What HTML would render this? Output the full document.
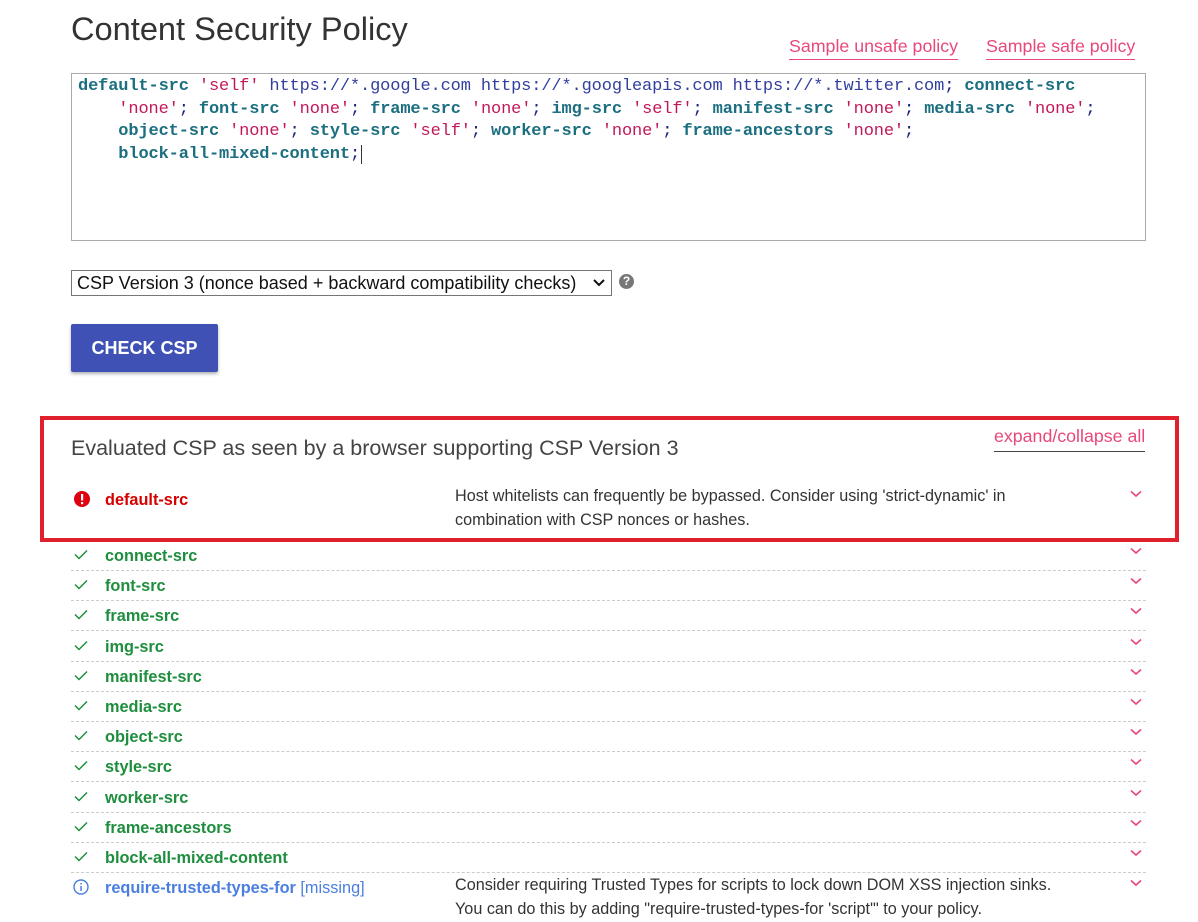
<!DOCTYPE html>
<html><head><meta charset="utf-8"><style>
body{margin:0;width:1198px;height:921px;overflow:hidden;background:#fff;font-family:"Liberation Sans",Arial,sans-serif;position:relative}
.a{position:absolute}
h1{position:absolute;left:71px;top:10px;margin:0;font-weight:400;font-size:32.6px;color:#333}
.lnk{color:#e8487a;font-size:17.8px;border-bottom:1px solid #e8487a;padding-bottom:2px}
.ta{left:71px;top:73px;width:1073px;height:166px;border:1px solid #aaa;font-family:"Liberation Mono",monospace;font-size:17px;letter-spacing:-0.13px;line-height:22.5px;color:#1a237e}
.ta div{position:absolute;left:6px;white-space:pre}
.k{font-weight:bold;color:#1b6f80}
.s{color:#c2185b}
.u{color:#303f9f}
.row{position:absolute;left:71px;width:1075px;height:30px;border-bottom:1px dashed #ccc}
.nm{position:absolute;left:34px;top:7px;font-size:16.3px;font-weight:bold;color:#1e8e3e}
.ck{position:absolute;left:2px;top:6px}
.cv{position:absolute;left:1059px;top:2px}
.ds{position:absolute;left:384px;font-size:16.2px;color:#333;line-height:24px;white-space:nowrap}
</style></head><body>
<h1>Content Security Policy</h1>
<span class="a lnk" style="left:789px;top:36px">Sample unsafe policy</span>
<span class="a lnk" style="left:986px;top:36px">Sample safe policy</span>
<div class="a ta">
<div style="top:2px"><span class="k">default-src</span> <span class="s">'self'</span> <span class="u">https://*.google.com https://*.googleapis.com https://*.twitter.com</span>; <span class="k">connect-src</span></div>
<div style="top:24.5px">    <span class="s">'none'</span>; <span class="k">font-src</span> <span class="s">'none'</span>; <span class="k">frame-src</span> <span class="s">'none'</span>; <span class="k">img-src</span> <span class="s">'self'</span>; <span class="k">manifest-src</span> <span class="s">'none'</span>; <span class="k">media-src</span> <span class="s">'none'</span>;</div>
<div style="top:47px">    <span class="k">object-src</span> <span class="s">'none'</span>; <span class="k">style-src</span> <span class="s">'self'</span>; <span class="k">worker-src</span> <span class="s">'none'</span>; <span class="k">frame-ancestors</span> <span class="s">'none'</span>;</div>
<div style="top:69.5px">    <span class="k">block-all-mixed-content</span>;<span style="border-left:1px solid #333;margin-left:1px"></span></div>
</div>
<div class="a" style="left:71px;top:270px;width:534px;height:24px;border:1px solid #767676;font-size:18px;color:#111;line-height:24px;padding-left:5px;white-space:nowrap">CSP Version 3 (nonce based + backward compatibility checks)<svg style="position:absolute;right:6px;top:8px" width="12" height="8" viewBox="0 0 12 8"><path d="M1 1l5 5 5-5" stroke="#111" stroke-width="2" fill="none"/></svg></div>
<div class="a" style="left:619px;top:274px;width:15px;height:15px;border-radius:50%;background:#777;color:#fff;font-size:12px;font-weight:bold;text-align:center;line-height:15px">?</div>
<div class="a" style="left:71px;top:324px;width:147px;height:48px;background:#3f51b5;border-radius:2px;box-shadow:0 2px 3px rgba(0,0,0,.3);color:#fff;font-size:18px;font-weight:bold;text-align:center;line-height:48px">CHECK CSP</div>
<div class="a" style="left:40px;top:416px;width:1131px;height:118px;border:4px solid #e0202d"></div>
<div class="a" style="left:71px;top:436px;font-size:21.5px;color:#444">Evaluated CSP as seen by a browser supporting CSP Version 3</div>
<span class="a" style="left:994px;top:426px;font-size:17.8px;color:#e8487a;border-bottom:1px solid #444;padding-bottom:4px">expand/collapse all</span>
<div class="row" style="top:484px;height:48px;border:none">
<svg class="ck" style="top:6px" width="18" height="18" viewBox="0 0 18 18"><circle cx="9" cy="9" r="8" fill="#e0000f"/><rect x="8" y="4" width="2.2" height="6.5" fill="#fff"/><rect x="8" y="12" width="2.2" height="2.2" fill="#fff"/></svg>
<span class="nm" style="color:#d50000">default-src</span>
<div class="ds" style="top:0">Host whitelists can frequently be bypassed. Consider using 'strict-dynamic' in<br>combination with CSP nonces or hashes.</div>
<svg class="cv" style="top:6px" width="12" height="8" viewBox="0 0 12 8"><path d="M1 1.5l5 4.5 5-4.5" stroke="#e8487a" stroke-width="1.6" fill="none"/></svg>
</div>
<div class="a" id="rows"></div>
<script>
var n=["connect-src","font-src","frame-src","img-src","manifest-src","media-src","object-src","style-src","worker-src","frame-ancestors","block-all-mixed-content"],h="";
for(var i=0;i<n.length;i++){var t=540+i*30.2;h+='<div class="row" style="top:'+t+'px"><svg class="ck" width="16" height="16" viewBox="0 0 16 16"><path d="M2 8.5l4 4 8-8" stroke="#1e8e3e" stroke-width="1.5" fill="none"/></svg><span class="nm">'+n[i]+'</span><svg class="cv" style="top:7px" width="12" height="8" viewBox="0 0 12 8"><path d="M1 1.5l5 4.5 5-4.5" stroke="#e8487a" stroke-width="1.6" fill="none"/></svg></div>';}
document.getElementById('rows').outerHTML=h;
</script>
<div class="row" style="top:872px;border:none;height:50px">
<svg class="ck" style="top:7px" width="16" height="16" viewBox="0 0 16 16"><circle cx="8" cy="8" r="7" stroke="#4a7fe0" stroke-width="1.4" fill="none"/><rect x="7.3" y="7" width="1.5" height="5" fill="#4a7fe0"/><rect x="7.3" y="4" width="1.5" height="1.5" fill="#4a7fe0"/></svg>
<span class="nm" style="color:#4a7fe0">require-trusted-types-for <span style="font-weight:normal">[missing]</span></span>
<div class="ds" style="top:1px">Consider requiring Trusted Types for scripts to lock down DOM XSS injection sinks.<br>You can do this by adding "require-trusted-types-for 'script'" to your policy.</div>
<svg class="cv" style="top:7px" width="12" height="8" viewBox="0 0 12 8"><path d="M1 1.5l5 4.5 5-4.5" stroke="#e8487a" stroke-width="1.6" fill="none"/></svg>
</div>
</body></html>
